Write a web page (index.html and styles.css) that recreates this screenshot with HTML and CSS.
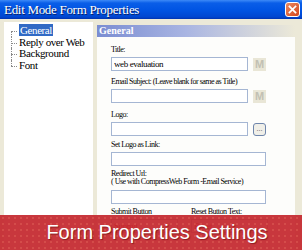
FILE: index.html
```html
<!DOCTYPE html>
<html lang="en">
<head>
    <meta charset="UTF-8">
    <meta name="viewport" content="width=device-width, initial-scale=1.0">
    <title>Edit Mode Form Properties</title>
    <link rel="stylesheet" href="styles.css">
</head>
<body>

    <div class="window">
        <div class="titlebar">
            <span class="title">Edit Mode Form Properties</span>
            <span class="close">
                <svg width="15" height="15" viewBox="0 0 15 15">
                    <path d="M4 4 L11 11 M11 4 L4 11" stroke="#fff" stroke-width="2" stroke-linecap="square"/>
                </svg>
            </span>
        </div>

        <div class="content">
            <ul class="tree">
                <li><span class="selected">General</span></li>
                <li>Reply over Web</li>
                <li>Background</li>
                <li>Font</li>
            </ul>

            <div class="panel">
                <div class="panel-head">General</div>
                <div class="panel-body">
                    <div class="field">
                        <label>Title:</label>
                        <div class="row">
                            <input class="short" type="text" value="web evaluation">
                            <span class="mbtn">M</span>
                        </div>
                    </div>
                    <div class="field">
                        <label>Email Subject: (Leave blank for same as Title)</label>
                        <div class="row">
                            <input class="short" type="text">
                            <span class="mbtn">M</span>
                        </div>
                    </div>
                    <div class="field logo">
                        <label>Logo:</label>
                        <div class="row">
                            <input class="short" type="text">
                            <span class="dots">...</span>
                        </div>
                    </div>
                    <div class="field">
                        <label>Set Logo as Link:</label>
                        <input class="long" type="text">
                    </div>
                    <div class="field">
                        <label class="two-line">Redirect Url:<br>( Use with CompressWeb Form -Email Service)</label>
                        <input class="long" type="text">
                    </div>
                    <div class="pair">
                        <div class="field">
                            <label>Submit Button</label>
                            <input class="btn-text" type="text" value="Submit">
                        </div>
                        <div class="field">
                            <label>Reset Button Text:</label>
                            <input class="btn-text wide" type="text" value="Reset">
                        </div>
                    </div>
                </div>
            </div>
        </div>

        <div class="banner">Form Properties Settings</div>
    </div>

</body>
</html>
```

FILE: styles.css
```css
body {
    margin: 0;
    padding: 0;
    font-family: "Liberation Serif", serif;
}

.window {
    position: relative;
    width: 302px;
    height: 250px;
    overflow: hidden;
    background-color: #ece9d8;
}

/* XP style title bar */
.titlebar {
    height: 19px;
    display: flex;
    align-items: center;
    justify-content: space-between;
    padding: 0 2px 0 4px;
    background: linear-gradient(#3d8af7 0, #0a5ee8 3px, #0054e3 10px, #0046d0 17px, #0033b0 19px);
}

.title {
    color: #fff;
    font-size: 13px;
    letter-spacing: -0.3px;
    text-shadow: 1px 1px 0 #0a246a;
}

.close {
    width: 15px;
    height: 15px;
    border: 1px solid #fff;
    border-radius: 3px;
    box-sizing: border-box;
    background: linear-gradient(135deg, #ec8a62, #d4461c);
    display: flex;
    align-items: center;
    justify-content: center;
}

.close svg {
    width: 13px;
    height: 13px;
}

.content {
    display: flex;
    padding: 3px 0 0 4px;
}

/* Left tree */
.tree {
    list-style: none;
    margin: 0;
    padding: 3px 0 0 13px;
    width: 76px;
    height: 240px;
    background-color: #fff;
    font-family: "Liberation Serif", serif;
    font-size: 11px;
    letter-spacing: -0.4px;
}

.tree li {
    position: relative;
    height: 11.5px;
    line-height: 11.5px;
    padding-left: 2px;
}

.tree li::before {
    content: "";
    position: absolute;
    left: -6px;
    top: 0;
    height: 100%;
    border-left: 1px dotted #8a8a8a;
}

.tree li:first-child::before {
    top: 6px;
    height: 6px;
}

.tree li:last-child::before {
    height: 6px;
}

.tree li::after {
    content: "";
    position: absolute;
    left: -6px;
    top: 6px;
    width: 6px;
    border-top: 1px dotted #8a8a8a;
}

.tree .selected {
    background-color: #316ac5;
    color: #fff;
    padding: 0 1px;
}

/* Right panel */
.panel {
    margin-left: 4px;
    width: 198px;
    padding-top: 3px;
}

.panel-head {
    height: 12px;
    line-height: 12px;
    padding-left: 2px;
    color: #fff;
    font-weight: bold;
    font-size: 10px;
    background: linear-gradient(to right, #7a8dd2, #a9b5e2 45%, #ece9d8);
}

.panel-body {
    background-color: #fdfdfb;
    height: 220px;
    padding: 9px 0 0 14px;
}

.field {
    display: flex;
    flex-direction: column;
}

.field label {
    font-size: 8px;
    line-height: 8px;
    letter-spacing: -0.5px;
    color: #000;
    margin-bottom: 3px;
}

.field label.two-line {
    line-height: 8px;
    margin-bottom: 4px;
}

.row {
    display: flex;
    align-items: center;
    gap: 5px;
    margin-bottom: 7px;
}

.field.logo {
    margin-top: 1px;
}

.field.logo .row {
    margin-bottom: 5px;
}

.field input {
    height: 14px;
    box-sizing: border-box;
    border: 1px solid #a5b6d3;
    padding: 0 2px;
    margin: 0 0 4px 0;
    font-family: "Liberation Serif", serif;
    font-size: 9px;
    letter-spacing: -0.4px;
    background-color: #fff;
    outline: none;
}

.row input {
    margin-bottom: 0;
}

.short {
    width: 137px;
}

.long {
    width: 155px;
}

.mbtn {
    width: 13px;
    height: 13px;
    background-color: #e9e6d6;
    color: #c2c0b3;
    font-family: "Liberation Sans", sans-serif;
    font-weight: bold;
    font-size: 11px;
    line-height: 13px;
    text-align: center;
}

.dots {
    width: 13px;
    height: 13px;
    box-sizing: border-box;
    border: 1px solid #6f86ac;
    border-radius: 3px;
    background-color: #f0efe8;
    color: #555;
    font-size: 8px;
    line-height: 9px;
    text-align: center;
}

.pair {
    display: flex;
    gap: 13px;
}

.btn-text {
    width: 67px;
    color: #c00;
}

.btn-text.wide {
    width: 77px;
}

/* Red caption overlay */
.banner {
    position: absolute;
    left: 0;
    right: 0;
    bottom: 0;
    height: 35px;
    padding-left: 12px;
    display: flex;
    align-items: center;
    justify-content: center;
    background-color: rgba(196, 40, 46, 0.93);
    background-image: radial-gradient(rgba(255, 150, 120, 0.22) 1px, transparent 1px);
    background-size: 6px 6px;
    color: #fff;
    font-family: "Liberation Sans", Arial, sans-serif;
    font-size: 20px;
    text-shadow: 1px 1px 1px rgba(80, 0, 0, 0.5);
}
```
